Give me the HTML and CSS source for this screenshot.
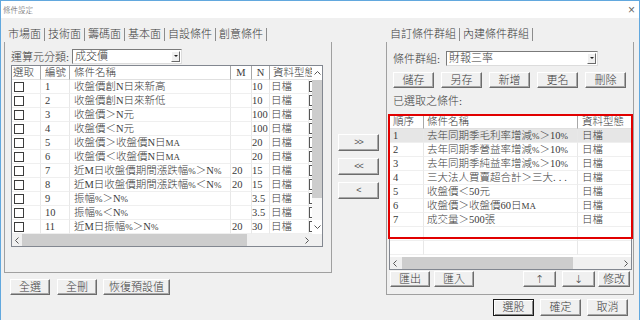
FILE: index.html
```html
<!DOCTYPE html>
<html>
<head lang="zh-Hant">
    <meta charset="UTF-8">
    <title>條件設定</title>
    <link rel="stylesheet" href="styles.css">
</head>
<body>
<div id="win">
    <div id="titlebar">
        <span class="title">條件設定</span>
        <span class="close">×</span>
    </div>
    <div id="main">
        <!-- 左邊：條件清單 -->
        <div id="left">
            <ul class="tabs">
                <li>市場面</li>
                <li>技術面</li>
                <li>籌碼面</li>
                <li>基本面</li>
                <li>自設條件</li>
                <li>創意條件</li>
            </ul>
            <div class="pane left-pane">
                <div class="combo-row">
                    <span class="lbl lbl-op">運算元分類:</span>
                    <div class="combo combo-op"><span>成交價</span><i class="drop"></i></div>
                </div>
                <div class="list cond-list">
                    <div class="table cond-table">
                        <div class="row head"><span>選取</span><span>編號</span><span>條件名稱</span><span>M</span><span>N</span><span class="wide">資料型態</span></div>
                        <div class="row"><span><i class="chk"></i></span><span>1</span><span>收盤價創N日來新高</span><span></span><span>10</span><span>日檔</span><span><i class="brk"></i></span></div>
                        <div class="row"><span><i class="chk"></i></span><span>2</span><span>收盤價創N日來新低</span><span></span><span>10</span><span>日檔</span><span><i class="brk"></i></span></div>
                        <div class="row"><span><i class="chk"></i></span><span>3</span><span>收盤價＞N元</span><span></span><span>100</span><span>日檔</span><span><i class="brk"></i></span></div>
                        <div class="row"><span><i class="chk"></i></span><span>4</span><span>收盤價＜N元</span><span></span><span>100</span><span>日檔</span><span><i class="brk"></i></span></div>
                        <div class="row"><span><i class="chk"></i></span><span>5</span><span>收盤價＞收盤價N日<em>MA</em></span><span></span><span>20</span><span>日檔</span><span><i class="brk"></i></span></div>
                        <div class="row"><span><i class="chk"></i></span><span>6</span><span>收盤價＜收盤價N日<em>MA</em></span><span></span><span>20</span><span>日檔</span><span><i class="brk"></i></span></div>
                        <div class="row"><span><i class="chk"></i></span><span>7</span><span>近M日收盤價期間漲跌幅<em>%</em>＞N<em>%</em></span><span>20</span><span>15</span><span>日檔</span><span><i class="brk"></i></span></div>
                        <div class="row"><span><i class="chk"></i></span><span>8</span><span>近M日收盤價期間漲跌幅<em>%</em>＜N<em>%</em></span><span>20</span><span>15</span><span>日檔</span><span><i class="brk"></i></span></div>
                        <div class="row"><span><i class="chk"></i></span><span>9</span><span>振幅<em>%</em>＞N<em>%</em></span><span></span><span>3.5</span><span>日檔</span><span><i class="brk"></i></span></div>
                        <div class="row"><span><i class="chk"></i></span><span>10</span><span>振幅<em>%</em>＜N<em>%</em></span><span></span><span>3.5</span><span>日檔</span><span><i class="brk"></i></span></div>
                        <div class="row"><span><i class="chk"></i></span><span>11</span><span>近M日振幅<em>%</em>＞N<em>%</em></span><span>20</span><span>30</span><span>日檔</span><span><i class="brk"></i></span></div>
                    </div>
                    <div class="vscroll">
                        <div class="sb-btn"><svg width="7" height="4"><polyline points="0.5,3.5 3.5,0.5 6.5,3.5" fill="none" stroke="#555"/></svg></div>
                        <div class="vthumb"></div>
                        <div class="vtrack"></div>
                        <div class="sb-btn"><svg width="7" height="4"><polyline points="0.5,0.5 3.5,3.5 6.5,0.5" fill="none" stroke="#555"/></svg></div>
                    </div>
                    <div class="hscroll">
                        <div class="sb-btn"><svg width="4" height="7"><polyline points="3.5,0.5 0.5,3.5 3.5,6.5" fill="none" stroke="#555"/></svg></div>
                        <div class="hthumb left-thumb"></div>
                        <div class="htrack"></div>
                        <div class="sb-btn"><svg width="4" height="7"><polyline points="0.5,0.5 3.5,3.5 0.5,6.5" fill="none" stroke="#555"/></svg></div>
                    </div>
                    <div class="corner"></div>
                </div>
            </div>
            <div class="btn-row left-btns">
                <button class="b40">全選</button>
                <button class="b40">全刪</button>
                <button class="b67">恢復預設值</button>
            </div>
        </div>

        <!-- 中間：加入 / 移除 -->
        <div id="mid">
            <button class="arrow">&gt;&gt;</button>
            <button class="arrow">&lt;&lt;</button>
            <button class="arrow">&lt;</button>
        </div>

        <!-- 右邊：條件群組 -->
        <div id="right">
            <ul class="tabs">
                <li>自訂條件群組</li>
                <li>內建條件群組</li>
            </ul>
            <div class="pane right-pane">
                <div class="combo-row indent">
                    <span class="lbl lbl-grp">條件群組:</span>
                    <div class="combo combo-grp"><span>財報三率</span><i class="drop"></i></div>
                </div>
                <div class="btn-row grp-btns indent">
                    <button>儲存</button>
                    <button>另存</button>
                    <button>新增</button>
                    <button>更名</button>
                    <button>刪除</button>
                </div>
                <div class="sel-lbl indent">已選取之條件:</div>
                <div class="list sel-list">
                    <div class="table sel-table">
                        <div class="row head"><span>順序</span><span>條件名稱</span><span>資料型態</span></div>
                        <div class="row on"><span>1</span><span>去年同期季毛利率增減<em>%</em>＞10<em>%</em></span><span>日檔</span></div>
                        <div class="row"><span>2</span><span>去年同期季營益率增減<em>%</em>＞10<em>%</em></span><span>日檔</span></div>
                        <div class="row"><span>3</span><span>去年同期季純益率增減<em>%</em>＞10<em>%</em></span><span>日檔</span></div>
                        <div class="row"><span>4</span><span>三大法人買賣超合計＞三大<b class="dots">...</b></span><span>日檔</span></div>
                        <div class="row"><span>5</span><span>收盤價＜50元</span><span>日檔</span></div>
                        <div class="row"><span>6</span><span>收盤價＞收盤價60日<em>MA</em></span><span>日檔</span></div>
                        <div class="row"><span>7</span><span>成交量＞500張</span><span>日檔</span></div>
                        <div class="row"><span></span><span></span><span></span></div>
                        <div class="row"><span></span><span></span><span></span></div>
                    </div>
                    <div class="hscroll">
                        <div class="sb-btn"><svg width="4" height="7"><polyline points="3.5,0.5 0.5,3.5 3.5,6.5" fill="none" stroke="#555"/></svg></div>
                        <div class="hthumb right-thumb"></div>
                        <div class="htrack"></div>
                        <div class="sb-btn"><svg width="4" height="7"><polyline points="0.5,0.5 3.5,3.5 0.5,6.5" fill="none" stroke="#555"/></svg></div>
                    </div>
                    <div class="mark"></div>
                </div>
                <div class="btn-row io-btns">
                    <button class="b40">匯出</button>
                    <button class="b40">匯入</button>
                    <button class="b33 push updown">↑</button>
                    <button class="b33 updown">↓</button>
                    <button class="b32">修改</button>
                </div>
            </div>
            <div class="btn-row ok-btns">
                <button class="def">選股</button>
                <button>確定</button>
                <button>取消</button>
            </div>
        </div>
    </div>
</div>
</body>
</html>
```

FILE: styles.css
```css
*{
    margin: 0;
    padding: 0;
    box-sizing: border-box;
}
ul{
    list-style: none;
}
body{
    width: 640px;
    height: 320px;
    overflow: hidden;
    background: #f0f0f0;
    font-family: "Liberation Serif", "Noto Sans CJK TC", serif;
    font-size: 11px;
    font-weight: 300;
    color: #3a3a3a;
}
em{
    font-style: normal;
    font-size: 9px;
}
#win{
    width: 640px;
    height: 320px;
    border: 1px solid #62a8de;
    border-bottom: none;
    background: #f0f0f0;
}
#titlebar{
    height: 17px;
    background: #ffffff;
    display: flex;
    align-items: center;
    justify-content: space-between;
    padding: 0 4px 0 2px;
}
.title{
    font-family: "Noto Sans CJK TC", sans-serif;
    font-size: 7.5px;
    color: #555;
}
.close{
    font-family: "Liberation Sans", sans-serif;
    font-size: 12px;
    color: #666;
}
#main{
    display: flex;
    align-items: flex-start;
    padding: 8px 0 0 3px;
}

/* tabs */
.tabs{
    display: flex;
    height: 16px;
    padding: 2px 0 0 4px;
}
.tabs li{
    height: 13px;
    line-height: 13px;
    padding-right: 3px;
    margin-right: 3px;
    border-right: 1px solid #8c8c8c;
    white-space: nowrap;
}
.pane{
    border: 1px solid #a0a0a0;
    border-top: none;
}

/* left */
#left{
    width: 328px;
}
.left-pane{
    height: 231px;
    padding: 6px 0 0 6px;
}
.combo-row{
    display: flex;
    align-items: center;
    height: 16px;
}
.lbl{
    white-space: nowrap;
}
.lbl-op{
    width: 61px;
}
.lbl-grp{
    width: 53px;
}
.combo{
    display: flex;
    align-items: center;
    justify-content: space-between;
    height: 15px;
    background: #ffffff;
    border: 1px solid;
    border-color: #7a7a7a #dcdcdc #dcdcdc #7a7a7a;
    padding-left: 2px;
    line-height: 13px;
}
.combo-op{
    width: 110px;
}
.combo-grp{
    width: 152px;
}
.drop{
    display: flex;
    align-items: center;
    justify-content: center;
    width: 9px;
    height: 11px;
    margin-right: 1px;
    background: #f0f0f0;
    border: 1px solid;
    border-color: #ffffff #6a6a6a #6a6a6a #ffffff;
}
.drop::after{
    content: "";
    border-left: 2px solid transparent;
    border-right: 2px solid transparent;
    border-top: 2px solid #222;
}

/* list boxes */
.list{
    position: relative;
    display: grid;
    background: #ffffff;
    border: 1px solid #828790;
}
.cond-list{
    width: 312px;
    height: 182px;
    margin-top: 1px;
    grid-template-columns: 300px 10px;
    grid-template-rows: 168px 12px;
}
.table{
    overflow: hidden;
}
.row{
    display: grid;
    height: 14px;
}
.row span{
    height: 14px;
    line-height: 13px;
    font-size: 10.5px;
    white-space: nowrap;
    overflow: hidden;
    border-right: 1px solid #e8e8e8;
    border-bottom: 1px solid #efefef;
}
.row.head span{
    border-right-color: #a8a8a8;
    border-bottom-color: #e0e0e0;
}
.cond-table .row{
    grid-template-columns: 29px 29px 161px 21px 18px 39px 3px;
}
.cond-table .row span:nth-child(1){ padding-left: 2px; }
.cond-table .row span:nth-child(2){ padding-left: 4px; }
.cond-table .row span:nth-child(3){ padding-left: 4px; }
.cond-table .row span:nth-child(4){ padding-left: 1px; }
.cond-table .row span:nth-child(6){ padding-left: 1px; }
.cond-table .row span:nth-child(7){ border-right: none; }
.cond-table .row.head span:nth-child(1){ padding-left: 1px; }
.cond-table .row.head span:nth-child(4),
.cond-table .row.head span:nth-child(5){
    padding-left: 0;
    text-align: center;
}
.cond-table .row.head .wide{
    grid-column: span 2;
    padding-left: 3px;
    border-right: none;
}
.chk{
    display: inline-block;
    width: 10px;
    height: 10px;
    margin-top: 2px;
    border: 1px solid #3c3c3c;
    background: #ffffff;
    vertical-align: top;
}
.brk{
    display: block;
    width: 3px;
    height: 11px;
    margin-top: 1px;
    border: 1px solid #555;
    border-right: none;
}

/* scroll bars */
.vscroll{
    display: flex;
    flex-direction: column;
    background: #f0f0f0;
}
.sb-btn{
    display: flex;
    align-items: center;
    justify-content: center;
    flex: 0 0 auto;
    background: #ffffff;
}
.vscroll .sb-btn{
    height: 14px;
}
.vthumb{
    height: 118px;
    background: #cdcdcd;
}
.vtrack{
    flex: 1;
    background: #f7f7f7;
}
.hscroll{
    display: flex;
    background: #f0f0f0;
}
.hscroll .sb-btn{
    width: 10px;
    background: #f0f0f0;
}
.hthumb{
    background: #cdcdcd;
}
.left-thumb{
    width: 225px;
}
.right-thumb{
    width: 171px;
    margin-left: 2px;
}
.htrack{
    flex: 1;
}
.corner{
    background: #f0f0f0;
}

/* buttons */
button{
    font-family: "Liberation Serif", "Noto Sans CJK TC", serif;
    font-size: 11px;
    font-weight: 300;
    color: #3a3a3a;
    width: 41px;
    height: 16px;
    line-height: 13px;
    background: #f0f0f0;
    border: 1px solid;
    border-color: #ffffff #6c6c6c #6c6c6c #ffffff;
    box-shadow: inset -1px -1px 0 #a8a8a8;
}
.btn-row{
    display: flex;
}
.left-btns{
    margin-top: 6px;
    padding-left: 6px;
    gap: 7px;
}
.b40{ width: 40px; }
.b67{ width: 67px; }
.b33{ width: 33px; }
.b32{ width: 32px; }
.left-btns .b67{ margin-left: -1px; }

/* middle */
#mid{
    display: flex;
    flex-direction: column;
    gap: 7px;
    width: 41px;
    margin-left: 6px;
    padding-top: 108px;
}
.arrow{
    height: 17px;
    font-family: "Liberation Sans", sans-serif;
    font-size: 9px;
    letter-spacing: -1px;
    color: #555;
}
.updown{
    font-family: "DejaVu Sans", sans-serif;
    font-size: 11px;
}

/* right */
#right{
    width: 248px;
    margin-left: 7px;
}
.right-pane{
    height: 253px;
    padding: 8px 1px 0 2px;
}
.indent{
    margin-left: 4px;
}
.grp-btns{
    margin-top: 6px;
    gap: 7px;
}
.sel-lbl{
    margin-top: 7px;
    height: 12px;
    line-height: 12px;
}
.sel-list{
    width: 243px;
    height: 156px;
    margin-top: 7px;
    grid-template-rows: 142px 12px;
}
.sel-table .row{
    grid-template-columns: 34px 154px 53px;
}
.sel-table .row span:nth-child(1){ padding-left: 3px; }
.sel-table .row span:nth-child(2){ padding-left: 3px; }
.sel-table .row span:nth-child(3){ padding-left: 4px; border-right: none; }
.sel-table .row.on span{
    background: #e6e6e6;
}
.dots{
    font-weight: normal;
    letter-spacing: 3px;
}
.mark{
    position: absolute;
    left: -2px;
    top: -1px;
    width: 245px;
    height: 125px;
    border: 2px solid #e10000;
}
.io-btns{
    margin-top: 1px;
    padding-left: 1px;
}
.io-btns button + button{
    margin-left: 4px;
}
.io-btns .push{
    margin-left: auto;
}
.io-btns .b33 + .b33{
    margin-left: 6px;
}
.io-btns .b32{
    margin-left: 3px;
    margin-right: 2px;
}
.ok-btns{
    justify-content: flex-end;
    gap: 6px;
    margin-top: 4px;
    padding-right: 6px;
}
.ok-btns button{
    height: 17px;
}
.ok-btns .def{
    border-color: #1a1a1a;
    box-shadow: inset 1px 1px 0 #ffffff, inset -1px -1px 0 #8a8a8a;
}
```
